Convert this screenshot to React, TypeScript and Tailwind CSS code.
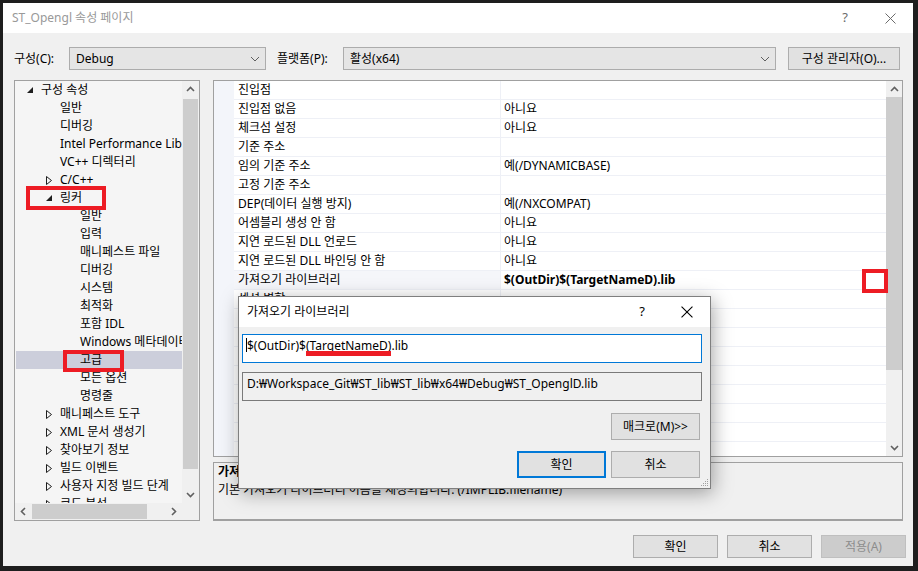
import React from "react";

type TreeItem = { label: string; level: 0 | 1 | 2; state?: "open" | "closed"; selected?: boolean };

const tree: TreeItem[] = [
  { label: "구성 속성", level: 0, state: "open" },
  { label: "일반", level: 1 },
  { label: "디버깅", level: 1 },
  { label: "Intel Performance Libraries", level: 1 },
  { label: "VC++ 디렉터리", level: 1 },
  { label: "C/C++", level: 1, state: "closed" },
  { label: "링커", level: 1, state: "open" },
  { label: "일반", level: 2 },
  { label: "입력", level: 2 },
  { label: "매니페스트 파일", level: 2 },
  { label: "디버깅", level: 2 },
  { label: "시스템", level: 2 },
  { label: "최적화", level: 2 },
  { label: "포함 IDL", level: 2 },
  { label: "Windows 메타데이터", level: 2 },
  { label: "고급", level: 2, selected: true },
  { label: "모든 옵션", level: 2 },
  { label: "명령줄", level: 2 },
  { label: "매니페스트 도구", level: 1, state: "closed" },
  { label: "XML 문서 생성기", level: 1, state: "closed" },
  { label: "찾아보기 정보", level: 1, state: "closed" },
  { label: "빌드 이벤트", level: 1, state: "closed" },
  { label: "사용자 지정 빌드 단계", level: 1, state: "closed" },
  { label: "코드 분석", level: 1, state: "closed" },
];

const indent = ["w-[11px]", "w-[30px]", "w-[50px]"];

const props: { name: string; value: string; bold?: boolean }[] = [
  { name: "진입점", value: "" },
  { name: "진입점 없음", value: "아니요" },
  { name: "체크섬 설정", value: "아니요" },
  { name: "기준 주소", value: "" },
  { name: "임의 기준 주소", value: "예(/DYNAMICBASE)" },
  { name: "고정 기준 주소", value: "" },
  { name: "DEP(데이터 실행 방지)", value: "예(/NXCOMPAT)" },
  { name: "어셈블리 생성 안 함", value: "아니요" },
  { name: "지연 로드된 DLL 언로드", value: "아니요" },
  { name: "지연 로드된 DLL 바인딩 안 함", value: "아니요" },
  { name: "가져오기 라이브러리", value: "$(OutDir)$(TargetNameD).lib", bold: true },
  { name: "섹션 병합", value: "" },
  { name: "대상 컴퓨터", value: "" },
  { name: "프로필", value: "" },
  { name: "CLR 스레드 특성", value: "" },
  { name: "CLR 이미지 형식", value: "" },
  { name: "키 파일", value: "" },
  { name: "키 컨테이너", value: "" },
  { name: "서명 연기", value: "" },
  { name: "CLR 관리되지 않는 코드 검사", value: "" },
];

function Chevron({ dir, className = "" }: { dir: "up" | "down" | "left" | "right"; className?: string }) {
  const pts = {
    up: "1,6 4.5,2.5 8,6",
    down: "1,3 4.5,6.5 8,3",
    left: "6,1 2.5,4.5 6,8",
    right: "3,1 6.5,4.5 3,8",
  }[dir];
  return (
    <svg width="9" height="9" viewBox="0 0 9 9" className={className}>
      <polyline points={pts} fill="none" stroke="currentColor" strokeWidth="1.6" />
    </svg>
  );
}

function ComboArrow() {
  return (
    <svg width="10" height="6" viewBox="0 0 10 6" className="text-[#606060]">
      <polyline points="1,1 5,5 9,1" fill="none" stroke="currentColor" strokeWidth="1" />
    </svg>
  );
}

function CloseIcon({ className = "" }: { className?: string }) {
  return (
    <svg width="11" height="11" viewBox="0 0 11 11" className={className}>
      <path d="M0.5 0.5 L10.5 10.5 M10.5 0.5 L0.5 10.5" stroke="currentColor" strokeWidth="1" />
    </svg>
  );
}

function Button({ children, className = "" }: { children: React.ReactNode; className?: string }) {
  return (
    <div className={`flex items-center justify-center border bg-[#e1e1e1] ${className}`}>{children}</div>
  );
}

export default function App() {
  return (
    <div className="w-[918px] h-[571px] bg-[#1e1e1e] pl-[3px] pt-[3px] text-[12px] text-black font-['Noto_Sans','Noto_Sans_CJK_KR',sans-serif] overflow-hidden">
      <div className="relative w-[910px] h-[563px] bg-[#f0f0f0] flex flex-col">
        {/* Title bar */}
        <div className="h-[30px] bg-white flex items-center pl-[9px] shrink-0">
          <span className="text-[#999999]">ST_Opengl 속성 페이지</span>
          <div className="ml-auto flex items-center pr-[13px] text-[#6b6b6b]">
            <span className="w-[20px] text-center text-[13px]">?</span>
            <span className="ml-[25px] w-[20px] flex justify-center">
              <CloseIcon />
            </span>
          </div>
        </div>

        {/* Config row */}
        <div className="mt-[14px] h-[23px] flex items-center pl-[11px] shrink-0">
          <span className="w-[55px]">구성(C):</span>
          <div className="w-[197px] h-[23px] border border-[#acacac] bg-[#e5e5e5] flex items-center pl-[6px] pr-[5px]">
            <span>Debug</span>
            <span className="ml-auto">
              <ComboArrow />
            </span>
          </div>
          <span className="ml-[11px] w-[66px]">플랫폼(P):</span>
          <div className="w-[433px] h-[23px] border border-[#acacac] bg-[#e5e5e5] flex items-center pl-[6px] pr-[5px]">
            <span>활성(x64)</span>
            <span className="ml-auto">
              <ComboArrow />
            </span>
          </div>
          <Button className="ml-[12px] w-[112px] h-[23px] border-[#adadad]">구성 관리자(O)...</Button>
        </div>

        {/* Main area */}
        <div className="mt-[10px] flex pl-[11px] shrink-0">
          {/* Tree */}
          <div className="w-[186px] h-[441px] border border-[#a0a0a0] bg-[#f5f5f5] flex flex-col">
            <div className="flex h-[422px]">
              <div className="relative w-[167px] overflow-hidden">
                {tree.map((item, i) => (
                  <div
                    key={i}
                    className={`flex h-[18px] items-center whitespace-nowrap ml-[1px] ${item.selected ? "bg-[#cccedb]" : ""}`}
                  >
                    <span className={`${indent[item.level]} shrink-0`} />
                    <span className="w-[14px] shrink-0 flex items-center">
                      {item.state === "open" && (
                        <svg width="6" height="6" viewBox="0 0 6 6">
                          <polygon points="6,0 6,6 0,6" fill="#1e1e1e" />
                        </svg>
                      )}
                      {item.state === "closed" && (
                        <svg width="6" height="9" viewBox="0 0 6 9">
                          <polygon points="0.5,0.5 5.5,4.5 0.5,8.5" fill="none" stroke="#1e1e1e" strokeWidth="1" />
                        </svg>
                      )}
                    </span>
                    <span>{item.label}</span>
                  </div>
                ))}
                <div className="absolute left-[11px] top-[105px] w-[80px] h-[24px] border-[4px] border-[#ed1c24]" />
                <div className="absolute left-[48px] top-[269px] w-[61px] h-[22px] border-[4px] border-[#ed1c24]" />
              </div>
              <div className="w-[17px] bg-[#f0f0f0] flex flex-col items-center">
                <div className="h-[17px] flex items-center justify-center text-[#606060]">
                  <Chevron dir="up" />
                </div>
                <div className="mt-[1px] w-[15px] h-[370px] bg-[#cdcdcd]" />
                <div className="mt-auto h-[17px] flex items-center justify-center text-[#606060]">
                  <Chevron dir="down" />
                </div>
              </div>
            </div>
            <div className="h-[17px] flex bg-[#f0f0f0]">
              <div className="w-[17px] flex items-center justify-center text-[#606060]">
                <Chevron dir="left" />
              </div>
              <div className="w-[115px] my-[1px] bg-[#cdcdcd]" />
              <div className="ml-auto w-[17px] flex items-center justify-center text-[#606060]">
                <Chevron dir="right" />
              </div>
              <div className="w-[17px]" />
            </div>
          </div>

          {/* Right column */}
          <div className="ml-[13px] w-[690px] flex flex-col">
            <div className="relative h-[377px] border border-[#a0a0a0] bg-white flex">
              <div className="w-[20px] bg-[#f3f5fa]" />
              <div className="flex-1 overflow-hidden">
                {props.map((p, i) => (
                  <div
                    key={i}
                    className={`flex h-[19px] border-b border-[#eef0f6] whitespace-nowrap ${p.bold ? "bg-[#f5f6fa]" : ""}`}
                  >
                    <div className="w-[267px] pl-[4px] border-r border-[#eef0f6] flex items-center">{p.name}</div>
                    <div className={`flex-1 pl-[3px] flex items-center bg-white ${p.bold ? "font-bold" : ""}`}>
                      {p.value}
                    </div>
                  </div>
                ))}
              </div>
              <div className="w-[16px] bg-[#f0f0f0] flex flex-col items-center">
                <div className="h-[16px] flex items-center justify-center text-[#606060]">
                  <Chevron dir="up" />
                </div>
                <div className="w-[16px] h-[273px] bg-[#cdcdcd]" />
                <div className="mt-auto h-[17px] flex items-center justify-center text-[#606060]">
                  <Chevron dir="down" />
                </div>
              </div>
              <div className="absolute left-[648px] top-[188px] w-[26px] h-[24px] border-[4px] border-[#ed1c24] bg-white" />
            </div>
            <div className="mt-[5px] h-[59px] border border-[#a0a0a0] border-b-2 pl-[4px] leading-[18px]">
              <div className="font-bold">가져오기 라이브러리</div>
              <div>기본 가져오기 라이브러리 이름을 재정의합니다. (/IMPLIB:filename)</div>
            </div>
          </div>
        </div>

        {/* Bottom buttons */}
        <div className="mt-[14px] flex justify-end gap-[9px] pr-[7px] shrink-0">
          <Button className="w-[85px] h-[23px] border-[#adadad]">확인</Button>
          <Button className="w-[85px] h-[23px] border-[#adadad]">취소</Button>
          <Button className="w-[85px] h-[23px] border-[#bfbfbf] !bg-[#cccccc] text-[#8c8c8c]">적용(A)</Button>
        </div>

        {/* Modal dialog */}
        <div className="absolute left-[235px] top-[293px] w-[473px] h-[193px] border border-[#7f7f7f] bg-[#f0f0f0] shadow-[2px_4px_18px_rgba(0,0,0,0.35)] flex flex-col">
          <div className="h-[30px] bg-white flex items-center pl-[8px] shrink-0">
            <span>가져오기 라이브러리</span>
            <div className="ml-auto flex items-center pr-[13px]">
              <span className="w-[20px] text-center text-[13px]">?</span>
              <span className="ml-[25px] w-[20px] flex justify-center">
                <CloseIcon className="w-[12px] h-[12px]" />
              </span>
            </div>
          </div>
          <div className="pl-[3px] pr-[8px]">
            <div className="mt-[7px] h-[29px] border border-[#0078d7] bg-white pl-[3px] pt-[2px] flex items-start">
              <span className="mt-[1px] w-[1px] h-[14px] bg-black shrink-0" />
              <span className="leading-[17px] whitespace-nowrap">
                $(OutDir)$
                <span className="relative inline-block leading-[17px]">
                  (TargetNameD)
                  <span className="absolute left-0 right-0 top-[14px] h-[5px] bg-[#ed1c24]" />
                </span>
                .lib
              </span>
            </div>
            <div className="mt-[9px] h-[29px] border border-[#7a7a7a] pl-[4px] pt-[2px] leading-[17px] whitespace-nowrap overflow-hidden">
              D:₩Workspace_Git₩ST_lib₩ST_lib₩x64₩Debug₩ST_OpenglD.lib
            </div>
          </div>
          <div className="mt-[12px] flex justify-end pr-[10px]">
            <Button className="w-[89px] h-[27px] border-[#adadad]">매크로(M)&gt;&gt;</Button>
          </div>
          <div className="mt-[11px] flex justify-end gap-[5px] pr-[10px]">
            <Button className="w-[89px] h-[27px] border-2 border-[#0078d7]">확인</Button>
            <Button className="w-[89px] h-[27px] border-[#adadad]">취소</Button>
          </div>
          <svg width="10" height="10" viewBox="0 0 10 10" className="absolute right-[1px] bottom-[1px]">
            <g fill="#a0a0a0">
              <rect x="8" y="2" width="1" height="1" />
              <rect x="6" y="4" width="1" height="1" />
              <rect x="8" y="4" width="1" height="1" />
              <rect x="4" y="6" width="1" height="1" />
              <rect x="6" y="6" width="1" height="1" />
              <rect x="8" y="6" width="1" height="1" />
              <rect x="2" y="8" width="1" height="1" />
              <rect x="4" y="8" width="1" height="1" />
              <rect x="6" y="8" width="1" height="1" />
              <rect x="8" y="8" width="1" height="1" />
            </g>
          </svg>
        </div>
      </div>
    </div>
  );
}
